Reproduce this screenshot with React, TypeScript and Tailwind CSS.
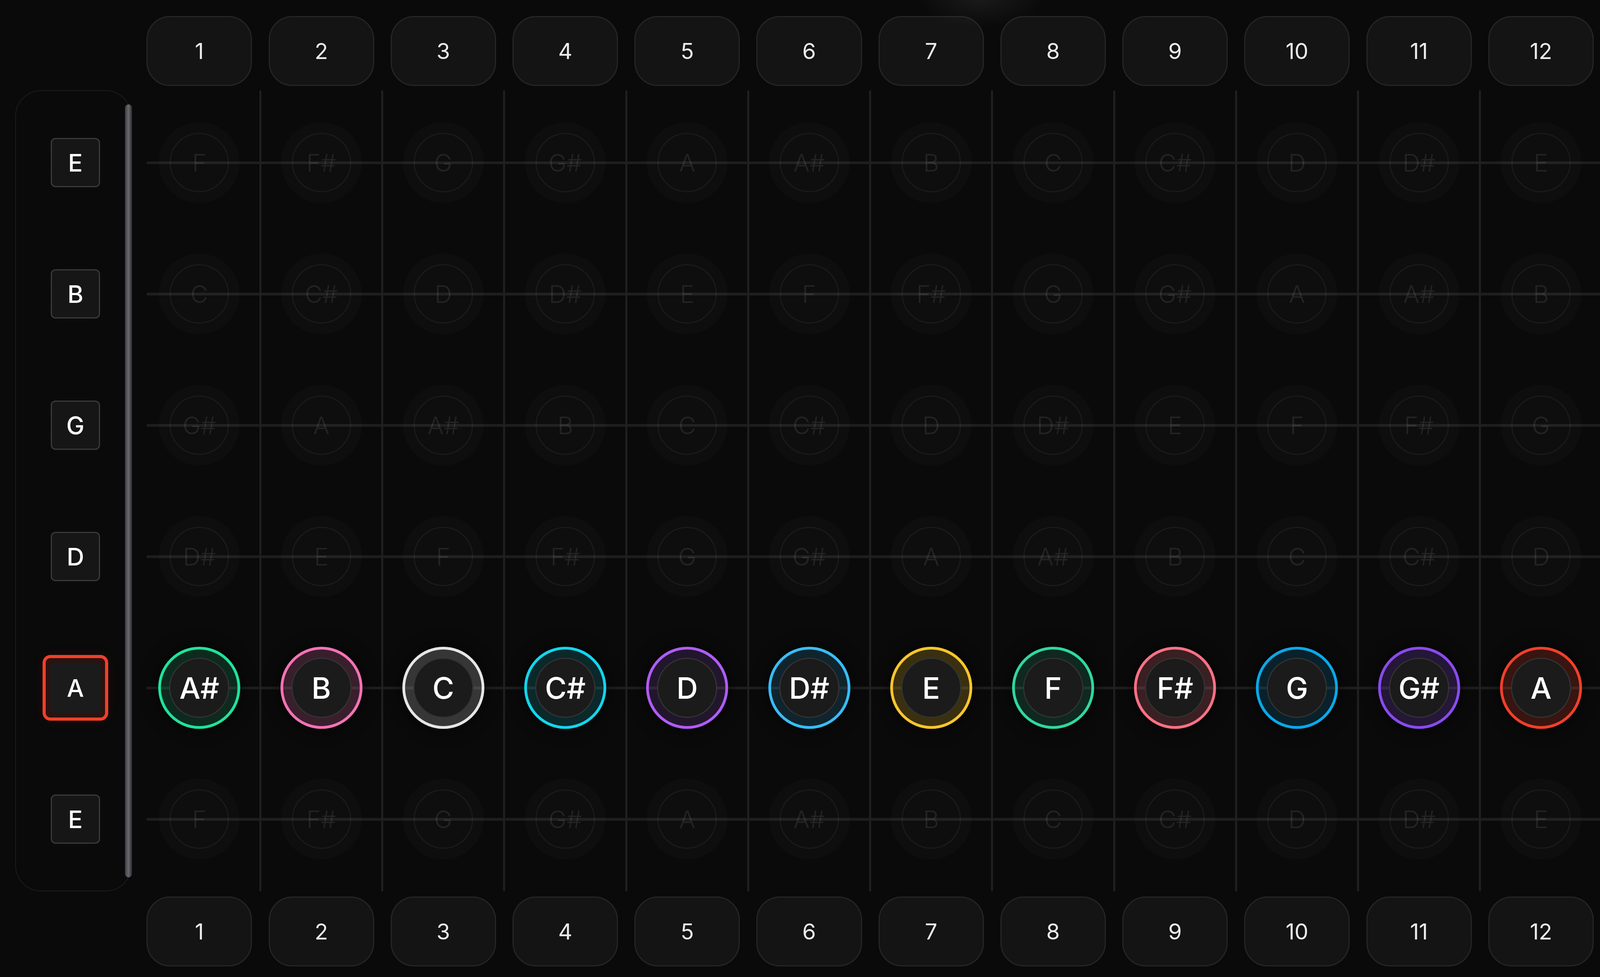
import React from 'react';

const CHROMATIC = ['C', 'C#', 'D', 'D#', 'E', 'F', 'F#', 'G', 'G#', 'A', 'A#', 'B'];
const STRINGS = ['E', 'B', 'G', 'D', 'A', 'E'];
const FRETS = [1, 2, 3, 4, 5, 6, 7, 8, 9, 10, 11, 12];
const SELECTED_STRING = 4;

// ring colours for the notes of the selected string
const NOTE_STYLES: Record<string, string> = {
  C: 'border-[#e6e6e6] bg-[#e6e6e6]/20',
  'C#': 'border-[#12d6ee] bg-[#12d6ee]/15',
  D: 'border-[#b05cf6] bg-[#b05cf6]/15',
  'D#': 'border-[#38bdf8] bg-[#38bdf8]/15',
  E: 'border-[#fcc62a] bg-[#fcc62a]/20',
  F: 'border-[#2fd8a0] bg-[#2fd8a0]/15',
  'F#': 'border-[#fb7185] bg-[#fb7185]/20',
  G: 'border-[#0aa8e8] bg-[#0aa8e8]/15',
  'G#': 'border-[#8a4af0] bg-[#8a4af0]/20',
  A: 'border-[#f0402a] bg-[#f0402a]/20',
  'A#': 'border-[#1fe39b] bg-[#1fe39b]/15',
  B: 'border-[#f472b6] bg-[#f472b6]/20',
};

function noteAt(open: string, fret: number) {
  return CHROMATIC[(CHROMATIC.indexOf(open) + fret) % 12];
}

function FretNumbers() {
  return (
    <div className="grid grid-cols-[490fr_4837fr_21fr]">
      <div />
      <div className="grid grid-cols-12 gap-x-[1.137%]">
        {FRETS.map((f) => (
          <div
            key={f}
            className="flex h-[179px] items-center justify-center rounded-[60px] border-[3px] border-[#252525] bg-[#141414] text-[56px] text-[#ededed]"
          >
            {f}
          </div>
        ))}
      </div>
      <div />
    </div>
  );
}

function StringButton({ label, selected }: { label: string; selected: boolean }) {
  if (selected) {
    return (
      <div className="h-[168px] w-[168px] shrink-0 rounded-[20px] border-[8px] border-[#f0402a] bg-[#f0402a]/15 p-[11px] shadow-[0_0_30px_rgba(240,64,42,0.08)]">
        <div className="flex h-full w-full items-center justify-center rounded-[13px] bg-[#1b1b1b] text-[62px] font-medium text-white">
          {label}
        </div>
      </div>
    );
  }
  return (
    <div className="flex h-[126px] w-[126px] shrink-0 items-center justify-center rounded-[12px] border-[3px] border-[#3a3a3a] bg-[#161616] text-[62px] font-medium text-white shadow-[0_0_30px_rgba(255,255,255,0.025)]">
      {label}
    </div>
  );
}

function Note({ name, active }: { name: string; active: boolean }) {
  if (active) {
    return (
      <div
        className={`flex h-[210px] w-[210px] shrink-0 items-center justify-center rounded-full border-[7px] shadow-[0_0_40px_rgba(0,0,0,0.7)] ${NOTE_STYLES[name]}`}
      >
        <div className="flex h-[154px] w-[154px] items-center justify-center rounded-full border-[3px] border-[#333333] bg-[#1b1b1b] text-[76px] font-medium text-white">
          {name}
        </div>
      </div>
    );
  }
  return (
    <div className="flex h-[206px] w-[206px] shrink-0 items-center justify-center rounded-full bg-white/[0.018]">
      <div className="flex h-[152px] w-[152px] items-center justify-center rounded-full border-[3px] border-white/[0.05] text-[62px] font-light text-white/[0.09]">
        {name}
      </div>
    </div>
  );
}

export default function App() {
  return (
    <div className="relative h-[2500px] w-full overflow-hidden bg-[#0a0a0a] pt-[41px] font-[Inter,sans-serif]">
      {/* faint light at the top edge */}
      <div className="pointer-events-none absolute left-[57.2%] top-[-90px] h-[160px] w-[8.2%] bg-[radial-gradient(ellipse_at_center,rgba(255,255,255,0.07),transparent_70%)]" />

      <FretNumbers />

      <div className="mt-[11px] grid h-[2050px] grid-cols-[51fr_389fr_50fr_4837fr_21fr]">
        <div />
        {/* string selector */}
        <div className="flex min-w-0 rounded-[66px] border-2 border-[#1c1c1c]">
          <div className="flex min-w-0 flex-1 flex-col py-[15px] pl-[8.5%]">
            {STRINGS.map((s, i) => (
              <div key={i} className="flex h-[336px] items-center justify-center">
                <StringButton label={s} selected={i === SELECTED_STRING} />
              </div>
            ))}
          </div>
          <div className="-mr-[3px] my-[34px] w-[18px] shrink-0 rounded-full bg-gradient-to-r from-[#3c3c42] via-[#6a6a70] to-[#2c2c30]" />
        </div>
        <div />

        {/* fretboard */}
        <div className="relative col-span-2 min-w-0">
          <div className="absolute inset-0 flex flex-col py-[17px]">
            {STRINGS.map((_, i) => (
              <div key={i} className="flex h-[336px] items-center">
                <div className="h-[7px] w-full rounded-l-full bg-[#1e1e1e]" />
              </div>
            ))}
          </div>
          <div className="relative flex h-full pr-[0.432%]">
            {FRETS.map((f, fi) => (
              <React.Fragment key={f}>
                <div className="flex min-w-0 flex-1 flex-col py-[17px]">
                  {STRINGS.map((s, si) => (
                    <div key={si} className="flex h-[336px] items-center justify-center">
                      <Note name={noteAt(s, f)} active={si === SELECTED_STRING} />
                    </div>
                  ))}
                </div>
                {fi < FRETS.length - 1 && (
                  <div className="flex w-[1.137%] shrink-0 justify-center">
                    <div className="h-full w-[5px] rounded-full bg-[#202020]" />
                  </div>
                )}
              </React.Fragment>
            ))}
          </div>
        </div>
      </div>

      <div className="mt-[13px]">
        <FretNumbers />
      </div>
    </div>
  );
}
